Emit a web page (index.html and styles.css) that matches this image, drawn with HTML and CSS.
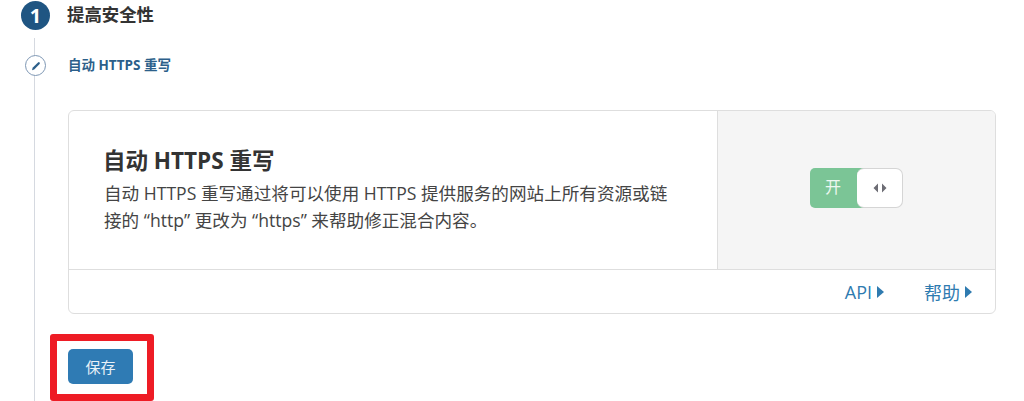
FILE: index.html

```html
<!DOCTYPE html>
<html lang="zh-CN">
<head>
  <meta charset="UTF-8">
  <title>提高安全性</title>
  <link rel="stylesheet" href="styles.css">
</head>
<body>
  <div class="step-head">
    <span class="step-num">1</span>
    <h2 class="step-title">提高安全性</h2>
  </div>

  <div class="step-body">
    <div class="sub-head">
      <span class="sub-icon">
        <svg width="12" height="12" viewBox="0 0 12 12"><path d="M2 10.2 L2.6 7.8 L8 2.4 Q8.8 1.7 9.6 2.4 Q10.3 3.2 9.6 4 L4.2 9.6 Z" fill="#2c5f8a"/></svg>
      </span>
      <span class="sub-title">自动 HTTPS 重写</span>
    </div>

    <div class="card">
      <div class="card-main">
        <div class="card-text">
          <h3>自动 HTTPS 重写</h3>
          <p>自动 HTTPS 重写通过将可以使用 HTTPS 提供服务的网站上所有资源或链接的 “http” 更改为 “https” 来帮助修正混合内容。</p>
        </div>
        <div class="card-control">
          <div class="toggle">
            <span class="toggle-on">开</span>
            <span class="toggle-knob">
              <svg width="14" height="10" viewBox="0 0 14 10"><path d="M5 0.5 V9.5 L0.5 5 Z M9 0.5 V9.5 L13.5 5 Z" fill="#6d6d75"/></svg>
            </span>
          </div>
        </div>
      </div>
      <div class="card-foot">
        <a class="foot-link">API<i class="arrow"></i></a>
        <a class="foot-link">帮助<i class="arrow"></i></a>
      </div>
    </div>

    <div class="actions">
      <button class="save">保存</button>
      <div class="highlight"></div>
    </div>
  </div>
</body>
</html>
```

FILE: styles.css

```css
html, body {
  margin: 0;
  height: 401px;
  overflow: hidden;
  background: #fff;
}
body {
  font-family: "Open Sans", "Noto Sans CJK SC", sans-serif;
  color: #333;
}
.step-head {
  display: flex;
  align-items: center;
  gap: 17px;
  padding: 0 0 0 21px;
  height: 30px;
}
.step-num {
  width: 29px;
  height: 29px;
  border-radius: 50%;
  background: #1f5582;
  color: #fff;
  font-size: 20px;
  font-weight: 700;
  line-height: 29px;
  text-align: center;
}
.step-title {
  margin: -3px 0 0;
  font-size: 17.4px;
  font-weight: 700;
  color: #333;
}
.step-body {
  margin: 8px 0 0 34px;
  border-left: 1px solid #d5d9e0;
  padding-left: 33px;
  height: 363px;
  box-sizing: border-box;
  position: relative;
}
.sub-head {
  display: flex;
  align-items: center;
  height: 40px;
}
.sub-icon {
  position: absolute;
  left: -10px;
  top: 17px;
  width: 21px;
  height: 21px;
  box-sizing: border-box;
  border: 1px solid #7e97b4;
  border-radius: 50%;
  background: #fff;
  display: flex;
  align-items: center;
  justify-content: center;
}
.sub-title {
  font-size: 13.5px;
  font-weight: 700;
  color: #2c5f8a;
  margin-top: 12px;
}
.card {
  width: 928px;
  height: 204px;
  box-sizing: border-box;
  margin-top: 32px;
  border: 1px solid #dedede;
  border-radius: 6px;
  overflow: hidden;
}
.card-main {
  display: flex;
  height: 158px;
  border-bottom: 1px solid #dedede;
}
.card-text {
  width: 649px;
  box-sizing: border-box;
  padding: 36px 0 0 35px;
  flex: none;
  border-right: 1px solid #dedede;
}
.card-text h3 {
  margin: 0 0 5px -1px;
  font-size: 22.5px;
  line-height: 28px;
  font-weight: 700;
  color: #333;
}
.card-text p {
  margin: 0;
  width: 572px;
  font-size: 17.6px;
  line-height: 27px;
  color: #444;
}
.card-control {
  flex: 1;
  background: #f5f5f5;
  display: flex;
  align-items: center;
  justify-content: center;
}
.toggle {
  display: flex;
  width: 93px;
  height: 40px;
  margin-top: -4px;
  position: relative;
}
.toggle-on {
  width: 60px;
  background: #7bc596;
  color: #eef8f1;
  border-radius: 5px 0 0 5px;
  font-size: 16px;
  line-height: 38px;
  padding-left: 15px;
  box-sizing: border-box;
}
.toggle-knob {
  position: absolute;
  right: 0;
  top: 0;
  width: 46px;
  height: 40px;
  box-sizing: border-box;
  background: #fff;
  border: 1px solid #d5d5d5;
  border-left: 0;
  border-radius: 7px;
  display: flex;
  align-items: center;
  justify-content: center;
}
.card-foot {
  display: flex;
  justify-content: flex-end;
  align-items: center;
  gap: 40px;
  height: 43px;
  padding-right: 23px;
}
.foot-link {
  font-size: 18px;
  color: #2f7bb0;
  display: flex;
  align-items: center;
  gap: 5px;
}
.arrow {
  width: 0;
  height: 0;
  border-left: 7px solid #2f7bb0;
  border-top: 6px solid transparent;
  border-bottom: 6px solid transparent;
}
.actions {
  margin-top: 35px;
  position: relative;
}
.save {
  display: block;
  width: 65px;
  height: 35px;
  border: 0;
  border-radius: 5px;
  background: #2f7bb4;
  color: #e8f1f7;
  font-family: inherit;
  font-size: 15px;
  padding: 0;
}
.highlight {
  position: absolute;
  left: -18px;
  top: -15px;
  width: 104px;
  height: 67px;
  box-sizing: border-box;
  border: 7px solid #ee1c25;
  border-radius: 3px;
}
```
